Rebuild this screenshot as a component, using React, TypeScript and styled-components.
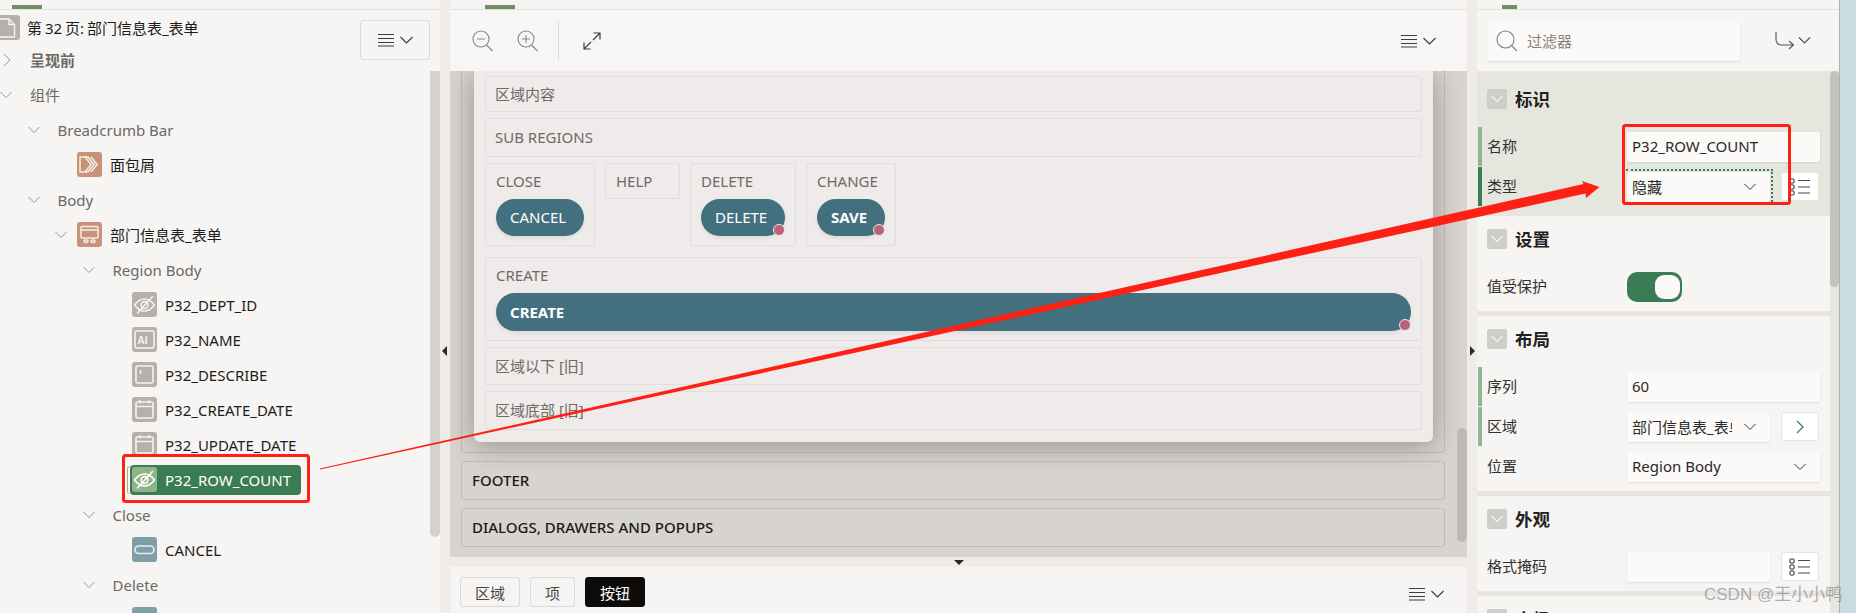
import React from 'react';
import styled, { createGlobalStyle } from 'styled-components';

const FONT = `"Noto Sans", "Noto Sans CJK SC", sans-serif`;

const Global = createGlobalStyle`
  html, body { margin: 0; padding: 0; overflow: hidden; background: #c8dde0; }
  * { box-sizing: border-box; }
`;

const Page = styled.div`
  position: relative;
  display: flex;
  width: 1856px;
  height: 613px;
  overflow: hidden;
  font-family: ${FONT};
  font-size: 15px;
  color: #1f1d1b;
  background: #c8dde0;
`;

const Panel = styled.section<{ $w: number }>`
  position: relative;
  display: flex;
  flex-direction: column;
  flex: none;
  width: ${p => p.$w}px;
  height: 613px;
  background: #f6f5f3;
  overflow: hidden;
`;

const Tabs = styled.div<{ $left: number; $tab: number }>`
  flex: none;
  height: 10px;
  padding: 5px 0 0 ${p => p.$left}px;
  border-bottom: 1px solid #e3e1de;
  &::before {
    content: '';
    display: block;
    width: ${p => p.$tab}px;
    height: 4px;
    background: #6f8f62;
  }
`;

const Gutter = styled.div<{ $dir: 'left' | 'right' }>`
  flex: none;
  width: 10px;
  height: 613px;
  background: #eeebe8;
  padding: 346px 0 0 ${p => (p.$dir === 'left' ? 2 : 3)}px;
  &::before {
    content: '';
    display: block;
    width: 0;
    height: 0;
    border-top: 5px solid transparent;
    border-bottom: 5px solid transparent;
    ${p => (p.$dir === 'left' ? 'border-right: 5px solid #2b2825;' : 'border-left: 5px solid #2b2825;')}
  }
`;

/* left tree */
const LeftBody = styled.div`
  display: flex;
  flex: 1;
  min-height: 0;
`;
const TreeCol = styled.div`
  flex: 1;
  min-width: 0;
`;
const TitleRow = styled.div`
  display: flex;
  align-items: center;
  height: 32px;
  padding-top: 3px;
  gap: 7px;
  word-spacing: -1px;
`;
const PageIcon = styled.span`
  display: flex;
  flex: none;
  width: 20px;
  height: 25px;
  background: #b5b1aa;
  border-radius: 0 3px 3px 0;
  align-items: center;
  color: #f6f5f3;
`;
const MenuBtn = styled.button`
  position: absolute;
  left: 360px;
  top: 20px;
  width: 70px;
  height: 40px;
  display: flex;
  align-items: center;
  justify-content: center;
  background: #f6f5f3;
  border: 1px solid #dedcd8;
  border-radius: 3px;
  padding: 0;
`;
const Row = styled.div<{ $d: number }>`
  display: flex;
  align-items: center;
  height: 35px;
  padding-left: ${p => p.$d * 27.5}px;
`;
const Twisty = styled.span`
  display: flex;
  flex: none;
  width: 22px;
  height: 14px;
  color: #9a9690;
`;
const GroupLabel = styled.span<{ $strong?: boolean }>`
  margin-left: 8px;
  color: #6c6864;
  font-weight: ${p => (p.$strong ? 600 : 400)};
`;
const ItemIcon = styled.span<{ $bg: string }>`
  display: flex;
  flex: none;
  align-items: center;
  justify-content: center;
  width: 25px;
  height: 25px;
  border-radius: 3px;
  background: ${p => p.$bg};
`;
const ItemLabel = styled.span`
  margin-left: 8px;
  color: #1f1d1b;
`;
const Selected = styled.div`
  display: flex;
  align-items: center;
  width: 171px;
  height: 30px;
  margin-left: -2px;
  padding-left: 2px;
  border-radius: 4px;
  background: #3a7d55;
  box-shadow: -3px 0 0 -1px #f6f5f3, -4px 0 0 -1px #8fb595;
  span:last-child { color: #fff; }
`;
const Thumb = styled.div`
  flex: none;
  width: 10px;
  height: 466px;
  margin-top: 61px;
  background: #d4d2ce;
  border-radius: 0 0 5px 5px;
`;

/* middle */
const Toolbar = styled.div`
  display: flex;
  align-items: center;
  flex: none;
  height: 61px;
  padding-right: 31px;
  background: #f7f6f4;
`;
const ToolIcon = styled.span<{ $ml: number }>`
  display: flex;
  margin-left: ${p => p.$ml}px;
  flex: none;
`;
const Divider = styled.span`
  flex: none;
  width: 1px;
  height: 40px;
  margin-left: 20px;
  background: #dedcd8;
`;
const Spacer = styled.span`
  flex: 1;
`;
const Canvas = styled.div`
  position: relative;
  flex: none;
  height: 486px;
  padding: 0 22px 0 11px;
  background: #d7d3ce;
  overflow: hidden;
`;
const Stage = styled.div`
  height: 382px;
  padding: 0 11px 0 12px;
  border: 1px dotted #a9a59f;
  border-top: 0;
  border-radius: 0 0 4px 4px;
`;
const Card = styled.div`
  display: flex;
  flex-direction: column;
  gap: 6px;
  height: 371px;
  padding: 5px 11px 0;
  background: #eeebea;
  border-radius: 0 0 6px 6px;
  box-shadow: 0 4px 26px rgba(60, 55, 50, 0.42);
`;
const Slot = styled.div<{ $h: number }>`
  display: flex;
  align-items: center;
  flex: none;
  height: ${p => p.$h}px;
  padding: 0 0 2px 9px;
  border: 1px dotted #d2cfcc;
  border-top: 1px solid #e2dfdd;
  border-radius: 3px;
  color: #6f6a66;
`;
const ButtonRow = styled.div`
  display: flex;
  align-items: flex-start;
  flex: none;
  gap: 10px;
  height: 88px;
`;
const Well = styled.div<{ $w?: number; $h?: number }>`
  flex: ${p => (p.$w ? 'none' : '0 0 auto')};
  width: ${p => (p.$w ? `${p.$w}px` : 'auto')};
  height: ${p => p.$h ?? 83}px;
  padding: 6px 10px 0;
  border: 1px dotted #d2cfcc;
  border-top: 1px solid #e2dfdd;
  border-radius: 3px;
  color: #6f6a66;
  line-height: 22px;
`;
const Pill = styled.div<{ $w?: number; $h?: number; $bold?: boolean; $dot?: boolean }>`
  position: relative;
  width: ${p => (p.$w ? `${p.$w}px` : 'auto')};
  height: ${p => p.$h ?? 37}px;
  margin-top: 7px;
  padding-left: 14px;
  border-radius: 19px;
  background: #43707e;
  color: #fff;
  font-weight: ${p => (p.$bold ? 700 : 400)};
  line-height: ${p => p.$h ?? 37}px;
  box-shadow: 0 2px 4px rgba(0, 0, 0, 0.08);
  ${p =>
    p.$dot
      ? `&::after {
    content: '';
    position: absolute;
    right: 0;
    bottom: 0;
    width: 10px;
    height: 10px;
    border-radius: 50%;
    background: #b9627e;
    border: 1px solid #f1e6e8;
  }`
      : ''}
`;
const Dock = styled.div`
  display: flex;
  align-items: center;
  height: 39px;
  margin-top: 8px;
  padding: 0 0 2px 10px;
  border: 1px dotted #a9a59f;
  border-radius: 4px;
  font-weight: 500;
  color: #1b1a18;
`;
const CanvasThumb = styled.div`
  position: absolute;
  right: 0;
  top: 357px;
  width: 10px;
  height: 114px;
  border-radius: 5px;
  background: #bdb9b4;
`;
const HSplit = styled.div`
  flex: none;
  display: flex;
  justify-content: center;
  height: 10px;
  padding-top: 3px;
  background: #eeebe8;
  &::before {
    content: '';
    width: 0;
    height: 0;
    border-left: 5px solid transparent;
    border-right: 5px solid transparent;
    border-top: 5px solid #2b2825;
  }
`;
const Footer = styled.div`
  display: flex;
  align-items: flex-start;
  flex: 1;
  gap: 10px;
  padding: 10px 23px 0 10px;
  background: #f6f5f3;
`;
const Tab = styled.button<{ $on?: boolean; $w: number }>`
  flex: none;
  width: ${p => p.$w}px;
  height: 30px;
  padding: 0;
  border-radius: 3px;
  font-family: ${FONT};
  font-size: 15px;
  border: 1px solid ${p => (p.$on ? '#0d0c0b' : '#dbd9d5')};
  background: ${p => (p.$on ? '#0d0c0b' : '#f5f4f2')};
  color: ${p => (p.$on ? '#fff' : '#4a4743')};
`;
const FooterMenu = styled.span`
  display: flex;
  margin-top: 10px;
`;

/* right */
const RightTop = styled.div`
  display: flex;
  align-items: center;
  flex: none;
  height: 61px;
  padding-left: 10px;
  background: #f6f5f3;
`;
const Filter = styled.div`
  display: flex;
  align-items: center;
  gap: 9px;
  width: 253px;
  height: 40px;
  padding-left: 9px;
  background: #fbfaf9;
  border-radius: 3px;
  box-shadow: 0 1px 2px rgba(0, 0, 0, 0.1);
  color: #85817c;
`;
const RightBody = styled.div`
  display: flex;
  flex: 1;
  min-height: 0;
`;
const Sections = styled.div`
  display: flex;
  flex-direction: column;
  flex: 1;
  gap: 5px;
  padding-top: 5px;
  background: #e8e5e1;
`;
const Section = styled.div<{ $tint?: boolean }>`
  flex: none;
  padding: 13px 10px 4px 1px;
  background: ${p => (p.$tint ? '#e5e7df' : '#f6f5f3')};
`;
const SecHead = styled.div`
  display: flex;
  align-items: center;
  gap: 8px;
  height: 20px;
  padding-left: 9px;
  margin-bottom: 18px;
  font-size: 17.5px;
  line-height: 18px;
  font-weight: 700;
  color: #232120;
`;
const SecBox = styled.span`
  display: flex;
  align-items: center;
  justify-content: center;
  width: 20px;
  height: 20px;
  background: #cfcdc8;
  border-radius: 2px;
`;
const PropRow = styled.div<{ $bar?: string }>`
  display: flex;
  align-items: center;
  height: 39px;
  margin-bottom: 1px;
  padding-left: 5px;
  border-left: 4px solid ${p => p.$bar ?? 'transparent'};
`;
const PropLabel = styled.span`
  flex: none;
  width: 140px;
  padding-bottom: 2px;
  color: #33302e;
`;
const Field = styled.div<{ $w?: number }>`
  position: relative;
  display: flex;
  align-items: center;
  flex: ${p => (p.$w ? 'none' : '1')};
  width: ${p => (p.$w ? `${p.$w}px` : 'auto')};
  height: 30px;
  padding-left: 5px;
  padding-bottom: 1px;
  background: #fbfaf9;
  border-radius: 3px;
  box-shadow: 0 1px 2px rgba(0, 0, 0, 0.1);
  color: #2b2927;
`;
const FieldText = styled.span<{ $clip?: number }>`
  display: block;
  white-space: nowrap;
  overflow: hidden;
  ${p => (p.$clip ? `width: ${p.$clip}px;` : '')}
`;
const Chevron = styled.span`
  position: absolute;
  right: 14px;
  top: 8px;
  display: flex;
  color: #3a3734;
`;
const FocusRing = styled.span`
  position: absolute;
  left: -1px;
  top: -3px;
  right: -3px;
  bottom: 0;
  border-top: 2px dotted #3a7d55;
  border-right: 2px dotted #3a7d55;
  pointer-events: none;
`;
const SideBtn = styled.button`
  display: flex;
  align-items: center;
  justify-content: center;
  flex: none;
  width: 38px;
  height: 29px;
  margin-left: 11px;
  padding: 0;
  background: #fff;
  border: 1px solid #e6e4e0;
  border-radius: 3px;
`;
const Toggle = styled.div`
  position: relative;
  width: 55px;
  height: 30px;
  border-radius: 10px;
  background: #3a7d55;
  &::after {
    content: '';
    position: absolute;
    left: 28px;
    top: 3px;
    width: 25px;
    height: 24px;
    border-radius: 9px;
    background: #faf9f7;
  }
`;
const RightScroll = styled.div`
  flex: none;
  width: 9px;
  background: #e8e5e1;
  &::before {
    content: '';
    display: block;
    height: 216px;
    background: #c5c2bd;
    border-radius: 5px;
  }
`;
const Blue = styled.div`
  flex: none;
  width: 17px;
  height: 613px;
  background: #c8dde0;
  border-left: 1px solid #9fb6bb;
`;
const Annotations = styled.svg`
  position: absolute;
  left: 0;
  top: 0;
  pointer-events: none;
`;
const Watermark = styled.div`
  position: absolute;
  left: 1704px;
  top: 584px;
  font-family: "Liberation Sans", "Noto Sans CJK SC", sans-serif;
  font-size: 17px;
  line-height: 22px;
  color: rgba(110, 110, 110, 0.55);
  white-space: nowrap;
`;

const Line = (p: { d: string; sw?: number; w: number; h: number; c?: string }) => (
  <svg width={p.w} height={p.h} viewBox={`0 0 ${p.w} ${p.h}`} fill="none" stroke={p.c ?? 'currentColor'} strokeWidth={p.sw ?? 1}>
    <path d={p.d} />
  </svg>
);

const Menu = () => (
  <svg width="35" height="14" viewBox="0 0 35 14" fill="none" stroke="#3f3c39" strokeWidth="1.1">
    <path d="M0 1.5H16M0 5.5H16M0 9.5H16M0 13H16" />
    <path d="M22.5 4L28.5 10L34.5 4" />
  </svg>
);
const Down = () => <Line w={12} h={14} d="M0.5 4L6 9.5L11.5 4" />;
const ArrowRight = () => <Line w={22} h={14} d="M4 1L10 7L4 13" />;
const ArrowDown = () => <Line w={22} h={14} d="M0.5 4L6 9.5L11.5 4" />;
const SecChevron = () => <Line w={12} h={14} c="#f6f5f3" sw={1.2} d="M0.5 4L6 9.5L11.5 4" />;

const Eye = ({ c = '#f4f3f1' }: { c?: string }) => (
  <svg width="23" height="21" viewBox="0 0 23 21" fill="none" stroke={c} strokeWidth="1.6">
    <path d="M1.5 11C5 6.5 8 5 11.5 5S18 6.5 21.5 11C18 15.5 15 17 11.5 17S5 15.5 1.5 11Z" />
    <circle cx="11.5" cy="11" r="3.4" />
    <path d="M4 19.5L20 2" />
  </svg>
);
const AiIcon = () => (
  <svg width="21" height="21" viewBox="0 0 21 21" fill="none">
    <rect x="1" y="2" width="19" height="17" rx="1.5" stroke="#f4f3f1" strokeWidth="1.6" />
    <text x="3.5" y="15" fontFamily="Liberation Sans" fontWeight="700" fontSize="10" fill="#f4f3f1">AI</text>
  </svg>
);
const AreaIcon = () => (
  <svg width="21" height="21" viewBox="0 0 21 21" fill="none" stroke="#f4f3f1">
    <rect x="2" y="2" width="17" height="17" rx="1.5" strokeWidth="1.6" />
    <path d="M6.5 6V10" strokeWidth="1.6" />
  </svg>
);
const DateIcon = () => (
  <svg width="21" height="21" viewBox="0 0 21 21" fill="none" stroke="#f4f3f1" strokeWidth="1.6">
    <rect x="2" y="3" width="17" height="16" rx="1.5" />
    <path d="M2 7.5H19M6 1V4.5M15 1V4.5" />
  </svg>
);
const BtnIcon = () => (
  <svg width="21" height="21" viewBox="0 0 21 21" fill="none" stroke="#e8eef0" strokeWidth="1.6">
    <rect x="1" y="7" width="19" height="7.5" rx="3.7" />
  </svg>
);
const CrumbIcon = () => (
  <svg width="23" height="21" viewBox="0 0 23 21" fill="none" stroke="#f6eee8" strokeWidth="1.5">
    <path d="M2 3H10L16 10.5L10 18H2Z" />
    <path d="M7 3L13 10.5L7 18" />
    <path d="M13 3L19 10.5L13 18" />
  </svg>
);
const RegionIcon = () => (
  <svg width="21" height="21" viewBox="0 0 21 21" fill="none" stroke="#f6eee8" strokeWidth="1.5">
    <rect x="2" y="2.5" width="17" height="11.5" rx="1" />
    <path d="M2 6H19" />
    <rect x="5" y="16" width="4" height="2.6" rx="1.3" />
    <rect x="12" y="16" width="4" height="2.6" rx="1.3" />
  </svg>
);

const GRAY = '#b5b1aa';
const ORANGE = '#c79378';
const TEAL = '#7f9ea8';

const Group = ({ d, label, open = true, strong }: { d: number; label: string; open?: boolean; strong?: boolean }) => (
  <Row $d={d}>
    <Twisty>{open ? <ArrowDown /> : <ArrowRight />}</Twisty>
    <GroupLabel $strong={strong}>{label}</GroupLabel>
  </Row>
);
const Item = ({ d, label, bg, icon, arrow }: { d: number; label?: string; bg: string; icon: React.ReactNode; arrow?: boolean }) => (
  <Row $d={d}>
    <Twisty>{arrow ? <ArrowDown /> : null}</Twisty>
    <ItemIcon $bg={bg}>{icon}</ItemIcon>
    {label ? <ItemLabel>{label}</ItemLabel> : null}
  </Row>
);

const ListIcon = () => (
  <svg width="22" height="18" viewBox="0 0 22 18" fill="none" stroke="#4a4743" strokeWidth="1.1">
    <circle cx="3" cy="3" r="2.2" />
    <circle cx="3" cy="9" r="2.2" />
    <circle cx="3" cy="15" r="2.2" />
    <path d="M9 2.5H21M9 9H21M9 15H21" />
  </svg>
);

const Arrow = () => (
  <Annotations width="1856" height="613" viewBox="0 0 1856 613">
    <rect x="123.5" y="455.5" width="185" height="46" rx="2" fill="none" stroke="#ff2015" strokeWidth="3" />
    <rect x="1623.5" y="125.5" width="166" height="78" rx="2" fill="none" stroke="#ff2015" strokeWidth="3" />
    <polygon
      points="320,469.5 320,468.5 1583.5,184 1582,181 1599.5,187 1586,198 1585.5,193.5"
      fill="#ff2015"
    />
  </Annotations>
);

export default function App() {
  return (
    <Page>
      <Global />
      <Panel $w={440}>
        <Tabs $left={12} $tab={30} />
        <LeftBody>
          <TreeCol>
            <TitleRow>
              <PageIcon>
                <svg width="16" height="22" viewBox="0 0 16 22" fill="none" stroke="#f6f5f3" strokeWidth="1.4">
                  <path d="M0 2H9L14.5 7.5V20H0" />
                  <path d="M9 2V7.5H14.5" />
                </svg>
              </PageIcon>
              第 32 页: 部门信息表_表单
            </TitleRow>
            <Group d={0} label="呈现前" open={false} strong />
            <Group d={0} label="组件" />
            <Group d={1} label="Breadcrumb Bar" />
            <Item d={2} label="面包屑" bg={ORANGE} icon={<CrumbIcon />} />
            <Group d={1} label="Body" />
            <Item d={2} label="部门信息表_表单" bg={ORANGE} icon={<RegionIcon />} arrow />
            <Group d={3} label="Region Body" />
            <Item d={4} label="P32_DEPT_ID" bg={GRAY} icon={<Eye />} />
            <Item d={4} label="P32_NAME" bg={GRAY} icon={<AiIcon />} />
            <Item d={4} label="P32_DESCRIBE" bg={GRAY} icon={<AreaIcon />} />
            <Item d={4} label="P32_CREATE_DATE" bg={GRAY} icon={<DateIcon />} />
            <Item d={4} label="P32_UPDATE_DATE" bg={GRAY} icon={<DateIcon />} />
            <Row $d={4}>
              <Twisty />
              <Selected>
                <ItemIcon $bg="#8fb38a">
                  <Eye c="#ffffff" />
                </ItemIcon>
                <ItemLabel>P32_ROW_COUNT</ItemLabel>
              </Selected>
            </Row>
            <Group d={3} label="Close" />
            <Item d={4} label="CANCEL" bg={TEAL} icon={<BtnIcon />} />
            <Group d={3} label="Delete" />
            <Item d={4} bg={TEAL} icon={<BtnIcon />} />
          </TreeCol>
          <Thumb />
        </LeftBody>
        <MenuBtn>
          <Menu />
        </MenuBtn>
      </Panel>
      <Gutter $dir="left" />
      <Panel $w={1017}>
        <Tabs $left={35} $tab={30} />
        <Toolbar>
          <ToolIcon $ml={22}>
            <svg width="21" height="22" viewBox="0 0 21 22" fill="none" stroke="#8a8682" strokeWidth="1.1">
              <circle cx="9" cy="9" r="8" />
              <path d="M14.5 15L20.5 21M5 9H13" />
            </svg>
          </ToolIcon>
          <ToolIcon $ml={24}>
            <svg width="21" height="22" viewBox="0 0 21 22" fill="none" stroke="#8a8682" strokeWidth="1.1">
              <circle cx="9" cy="9" r="8" />
              <path d="M14.5 15L20.5 21M5 9H13M9 5V13" />
            </svg>
          </ToolIcon>
          <Divider />
          <ToolIcon $ml={24}>
            <svg width="18" height="18" viewBox="0 0 18 18" fill="none" stroke="#3f3c39" strokeWidth="1.2">
              <path d="M1 17L8 10M10 8L17 1M10.5 1H17V7.5M1 10.5V17H7.5" />
            </svg>
          </ToolIcon>
          <Spacer />
          <ToolIcon $ml={0}>
            <Menu />
          </ToolIcon>
        </Toolbar>
        <Canvas>
          <Stage>
            <Card>
              <Slot $h={36}>区域内容</Slot>
              <Slot $h={39}>SUB REGIONS</Slot>
              <ButtonRow>
                <Well $w={110}>
                  CLOSE
                  <Pill $w={88}>CANCEL</Pill>
                </Well>
                <Well $w={75} $h={36}>HELP</Well>
                <Well $w={106}>
                  DELETE
                  <Pill $w={84} $dot>DELETE</Pill>
                </Well>
                <Well $w={90}>
                  CHANGE
                  <Pill $w={68} $bold $dot>SAVE</Pill>
                </Well>
              </ButtonRow>
              <Well $h={84}>
                CREATE
                <Pill $h={38} $bold $dot>CREATE</Pill>
              </Well>
              <Slot $h={38}>区域以下 [旧]</Slot>
              <Slot $h={39}>区域底部 [旧]</Slot>
            </Card>
          </Stage>
          <Dock>FOOTER</Dock>
          <Dock>DIALOGS, DRAWERS AND POPUPS</Dock>
          <CanvasThumb />
        </Canvas>
        <HSplit />
        <Footer>
          <Tab $w={60}>区域</Tab>
          <Tab $w={45}>项</Tab>
          <Tab $w={60} $on>按钮</Tab>
          <Spacer />
          <FooterMenu>
            <Menu />
          </FooterMenu>
        </Footer>
      </Panel>
      <Gutter $dir="right" />
      <Panel $w={362}>
        <Tabs $left={25} $tab={15} />
        <RightTop>
          <Filter>
            <svg width="22" height="22" viewBox="0 0 22 22" fill="none" stroke="#85817c" strokeWidth="1.1">
              <circle cx="9.5" cy="9.5" r="8.5" />
              <path d="M15.5 15.5L21 21" />
            </svg>
            过滤器
          </Filter>
          <ToolIcon $ml={35}>
            <svg width="36" height="20" viewBox="0 0 36 20" fill="none" stroke="#55524e" strokeWidth="1.1">
              <path d="M1 1V8C1 12 3 14 7 14H18M14 10L18.5 14L14 18" />
              <path d="M24 6.5L29.5 12L35 6.5" />
            </svg>
          </ToolIcon>
        </RightTop>
        <RightBody>
          <Sections>
            <Section $tint>
              <SecHead><SecBox><SecChevron /></SecBox>标识</SecHead>
              <PropRow $bar="#8fb595">
                <PropLabel>名称</PropLabel>
                <Field>P32_ROW_COUNT</Field>
              </PropRow>
              <PropRow $bar="#3a7d55">
                <PropLabel>类型</PropLabel>
                <Field $w={143}>
                  隐藏
                  <Chevron><Down /></Chevron>
                  <FocusRing />
                </Field>
                <SideBtn><ListIcon /></SideBtn>
              </PropRow>
            </Section>
            <Section>
              <SecHead><SecBox><SecChevron /></SecBox>设置</SecHead>
              <PropRow>
                <PropLabel>值受保护</PropLabel>
                <Toggle />
              </PropRow>
            </Section>
            <Section>
              <SecHead><SecBox><SecChevron /></SecBox>布局</SecHead>
              <PropRow $bar="#8fb595">
                <PropLabel>序列</PropLabel>
                <Field>60</Field>
              </PropRow>
              <PropRow $bar="#8fb595">
                <PropLabel>区域</PropLabel>
                <Field $w={143}>
                  <FieldText $clip={100}>部门信息表_表单</FieldText>
                  <Chevron><Down /></Chevron>
                </Field>
                <SideBtn><Line w={10} h={14} c="#43707e" sw={1.2} d="M2 1L8 7L2 13" /></SideBtn>
              </PropRow>
              <PropRow>
                <PropLabel>位置</PropLabel>
                <Field>
                  Region Body
                  <Chevron><Down /></Chevron>
                </Field>
              </PropRow>
            </Section>
            <Section>
              <SecHead><SecBox><SecChevron /></SecBox>外观</SecHead>
              <PropRow>
                <PropLabel>格式掩码</PropLabel>
                <Field $w={143} />
                <SideBtn><ListIcon /></SideBtn>
              </PropRow>
            </Section>
            <Section>
              <SecHead><SecBox />高级</SecHead>
            </Section>
          </Sections>
          <RightScroll />
        </RightBody>
      </Panel>
      <Blue />
      <Arrow />
      <Watermark>CSDN @王小小鸭</Watermark>
    </Page>
  );
}
